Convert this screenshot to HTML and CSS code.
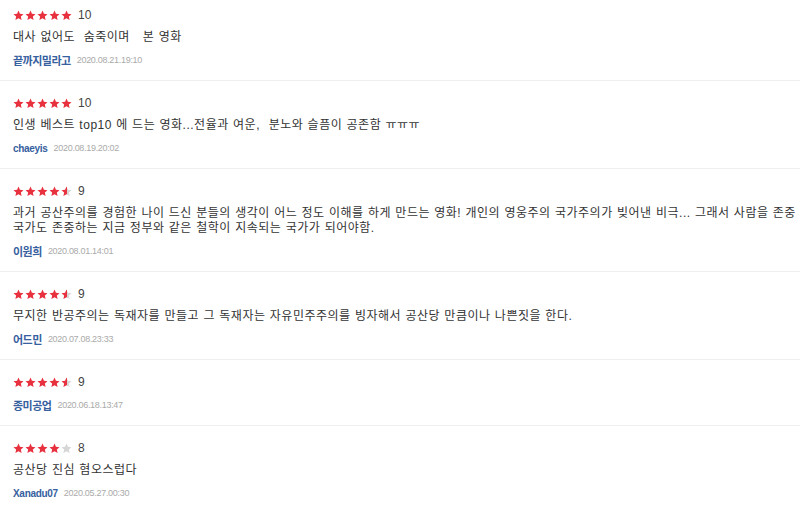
FILE: index.html
```html
<!DOCTYPE html>
<html lang="ko">

<head>
    <meta charset="UTF-8">
    <title>관람평</title>
    <link rel="stylesheet" href="styles.css">
</head>

<body>
    <!-- 별 모양 정의 -->
    <svg class="defs" width="0" height="0">
        <defs>
            <linearGradient id="half">
                <stop offset="50%" stop-color="#e8313f"/>
                <stop offset="50%" stop-color="#d6d6d6"/>
            </linearGradient>
            <symbol id="star" viewBox="0 0 24 24">
                <path d="M12 1.1L15.17 8.23 22.94 9.05 17.14 14.27 18.76 21.9 12 18 5.24 21.9 6.86 14.27 1.06 9.05 8.83 8.23z"/>
            </symbol>
        </defs>
    </svg>

    <ul class="reviews">
        <li class="review">
            <div class="score">
                <svg class="stars" viewBox="0 0 59 11">
                    <use href="#star" x="0" width="11" height="11" class="on"/>
                    <use href="#star" x="12" width="11" height="11" class="on"/>
                    <use href="#star" x="24" width="11" height="11" class="on"/>
                    <use href="#star" x="36" width="11" height="11" class="on"/>
                    <use href="#star" x="48" width="11" height="11" class="on"/>
                </svg>
                <span class="num">10</span>
            </div>
            <p class="text">대사 없어도&nbsp; 숨죽이며&nbsp;&nbsp; 본 영화</p>
            <div class="meta"><span class="name">끝까지밀라고</span><span class="date">2020.08.21.19:10</span></div>
        </li>
        <li class="review">
            <div class="score">
                <svg class="stars" viewBox="0 0 59 11">
                    <use href="#star" x="0" width="11" height="11" class="on"/>
                    <use href="#star" x="12" width="11" height="11" class="on"/>
                    <use href="#star" x="24" width="11" height="11" class="on"/>
                    <use href="#star" x="36" width="11" height="11" class="on"/>
                    <use href="#star" x="48" width="11" height="11" class="on"/>
                </svg>
                <span class="num">10</span>
            </div>
            <p class="text">인생 베스트 top10 에 드는 영화...전율과 여운,&nbsp; 분노와 슬픔이 공존함 ㅠㅠㅠ</p>
            <div class="meta"><span class="name name-en">chaeyis</span><span class="date">2020.08.19.20:02</span></div>
        </li>
        <li class="review">
            <div class="score">
                <svg class="stars" viewBox="0 0 59 11">
                    <use href="#star" x="0" width="11" height="11" class="on"/>
                    <use href="#star" x="12" width="11" height="11" class="on"/>
                    <use href="#star" x="24" width="11" height="11" class="on"/>
                    <use href="#star" x="36" width="11" height="11" class="on"/>
                    <use href="#star" x="48" width="11" height="11" class="half"/>
                </svg>
                <span class="num">9</span>
            </div>
            <p class="text">과거 공산주의를 경험한 나이 드신 분들의 생각이 어느 정도 이해를 하게 만드는 영화! 개인의 영웅주의 국가주의가 빚어낸 비극... 그래서 사람을 존중<br>국가도 존중하는 지금 정부와 같은 철학이 지속되는 국가가 되어야함.</p>
            <div class="meta"><span class="name">이원희</span><span class="date">2020.08.01.14:01</span></div>
        </li>
        <li class="review">
            <div class="score">
                <svg class="stars" viewBox="0 0 59 11">
                    <use href="#star" x="0" width="11" height="11" class="on"/>
                    <use href="#star" x="12" width="11" height="11" class="on"/>
                    <use href="#star" x="24" width="11" height="11" class="on"/>
                    <use href="#star" x="36" width="11" height="11" class="on"/>
                    <use href="#star" x="48" width="11" height="11" class="half"/>
                </svg>
                <span class="num">9</span>
            </div>
            <p class="text">무지한 반공주의는 독재자를 만들고 그 독재자는 자유민주주의를 빙자해서 공산당 만큼이나 나쁜짓을 한다.</p>
            <div class="meta"><span class="name">어드민</span><span class="date">2020.07.08.23:33</span></div>
        </li>
        <li class="review">
            <div class="score">
                <svg class="stars" viewBox="0 0 59 11">
                    <use href="#star" x="0" width="11" height="11" class="on"/>
                    <use href="#star" x="12" width="11" height="11" class="on"/>
                    <use href="#star" x="24" width="11" height="11" class="on"/>
                    <use href="#star" x="36" width="11" height="11" class="on"/>
                    <use href="#star" x="48" width="11" height="11" class="half"/>
                </svg>
                <span class="num">9</span>
            </div>
            <p class="text"></p>
            <div class="meta"><span class="name">종미공업</span><span class="date">2020.06.18.13:47</span></div>
        </li>
        <li class="review">
            <div class="score">
                <svg class="stars" viewBox="0 0 59 11">
                    <use href="#star" x="0" width="11" height="11" class="on"/>
                    <use href="#star" x="12" width="11" height="11" class="on"/>
                    <use href="#star" x="24" width="11" height="11" class="on"/>
                    <use href="#star" x="36" width="11" height="11" class="on"/>
                    <use href="#star" x="48" width="11" height="11" class="off"/>
                </svg>
                <span class="num">8</span>
            </div>
            <p class="text">공산당 진심 혐오스럽다</p>
            <div class="meta"><span class="name name-en">Xanadu07</span><span class="date">2020.05.27.00:30</span></div>
        </li>
    </ul>
</body>

</html>
```

FILE: styles.css
```css
body {
    margin: 0;
    background: #fff;
    font-family: "Liberation Sans", "Noto Sans CJK KR", sans-serif;
    color: #333;
    overflow: hidden;
}

.defs {
    position: absolute;
    width: 0;
    height: 0;
}

.reviews {
    list-style: none;
    margin: 0;
    padding: 0;
}

.review {
    padding: 14px 13px 12px;
    border-bottom: 1px solid #efefef;
}

.review:first-child {
    padding-top: 7px;
}

.score {
    display: flex;
    align-items: center;
    height: 16px;
}

.stars {
    width: 59px;
    height: 11px;
}

.stars .on {
    fill: #e8313f;
}

.stars .half {
    fill: url(#half);
}

.stars .off {
    fill: #d6d6d6;
}

.num {
    margin-left: 6px;
    font-size: 12px;
    color: #444;
}

.text {
    margin: 7px 0;
    font-family: "Liberation Sans", "Noto Sans CJK KR", sans-serif;
    font-size: 12px;
    line-height: 15px;
    letter-spacing: 0.5px;
    word-spacing: 0.5px;
    color: #333;
    white-space: nowrap;
}

.meta {
    display: flex;
    align-items: center;
    height: 16px;
}

.name {
    font-family: "Noto Sans CJK KR", sans-serif;
    font-size: 11px;
    font-weight: bold;
    letter-spacing: -0.5px;
    color: #36609e;
}

.name-en {
    font-family: "Liberation Sans", sans-serif;
    font-size: 10px;
    letter-spacing: -0.3px;
}

.date {
    margin-left: 6px;
    font-size: 9px;
    letter-spacing: -0.3px;
    color: #aaa;
}
```
